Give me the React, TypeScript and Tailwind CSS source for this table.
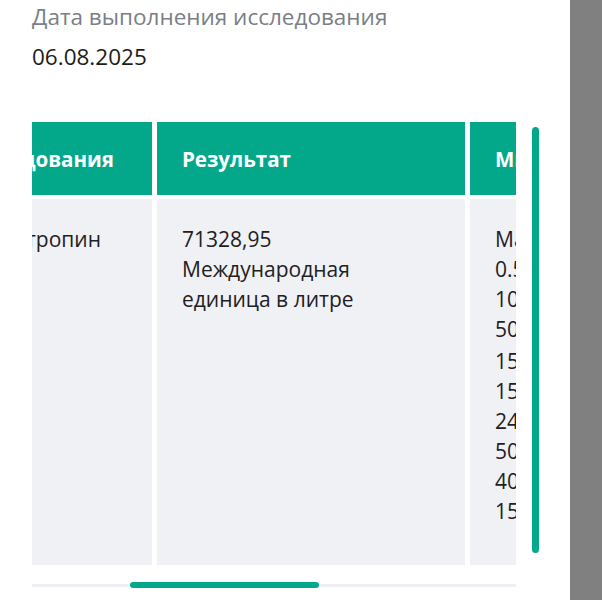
import React from "react";

const ranges = [
  "Мальчики:",
  "0.5 - 1 год",
  "10 - 20",
  "50 - 100",
  "15 - 30",
  "15 - 40",
  "24 - 60",
  "50 - 80",
  "40 - 90",
  "15 - 35",
];

export default function App() {
  return (
    <div className="w-[602px] h-[600px] flex bg-white overflow-hidden font-['Open_Sans',sans-serif]">
      <div className="relative w-[570px] h-full pl-[32px]">
        <div className="pt-[2px] text-[22.5px] leading-[30px] text-[#7a7e86] whitespace-nowrap">
          Дата выполнения исследования
        </div>
        <div className="mt-[10px] text-[22.5px] leading-[30px] text-[#1c1c1c]">06.08.2025</div>

        <div className="mt-[50px] w-[484px] overflow-hidden">
          <div className="flex flex-col gap-[4px]">
            {/* header row */}
            <div className="flex h-[73px] gap-[5px] text-white font-bold text-[20.5px] leading-[28px]">
              <div className="w-[120px] shrink-0 bg-[#03a88a] flex items-center justify-end pr-[38px] overflow-hidden whitespace-nowrap">
                Наименование исследования
              </div>
              <div className="w-[308px] shrink-0 bg-[#03a88a] flex items-center pl-[25px]">Результат</div>
              <div className="w-[46px] shrink-0 bg-[#03a88a] flex items-center pl-[25px] overflow-hidden whitespace-nowrap">
                Минимальное
              </div>
            </div>
            {/* body row */}
            <div className="flex h-[366px] gap-[5px] text-[#1f2023] text-[21px] leading-[30px]">
              <div className="w-[120px] shrink-0 bg-[#f0f1f5] pt-[25px] flex justify-end pr-[51px] overflow-hidden whitespace-nowrap">
                <span>Соматотропин</span>
              </div>
              <div className="w-[308px] shrink-0 bg-[#f0f1f5] pt-[25px] pl-[25px] pr-[60px]">
                <div>71328,95</div>
                <div>Международная единица в литре</div>
              </div>
              <div className="w-[46px] shrink-0 bg-[#f0f1f5] pt-[25px] pl-[25px] overflow-hidden whitespace-nowrap">
                {ranges.map((r, i) => (
                  <div key={i} className={i === 4 ? "mt-[2px]" : ""}>{r}</div>
                ))}
              </div>
            </div>
          </div>
        </div>

        {/* horizontal scrollbar */}
        <div className="relative mt-[17px] w-[484px] h-[6px] flex items-center">
          <div className="w-full h-[3px] bg-[#eeeff2]"></div>
          <div className="absolute left-[98px] top-0 w-[189px] h-[6px] rounded-full bg-[#03a88a]"></div>
        </div>

        {/* vertical scrollbar */}
        <div className="absolute left-[532px] top-[127px] w-[7px] h-[426px] rounded-full bg-[#03a88a]"></div>
      </div>
      <div className="w-[32px] h-full bg-[#808080]"></div>
    </div>
  );
}
